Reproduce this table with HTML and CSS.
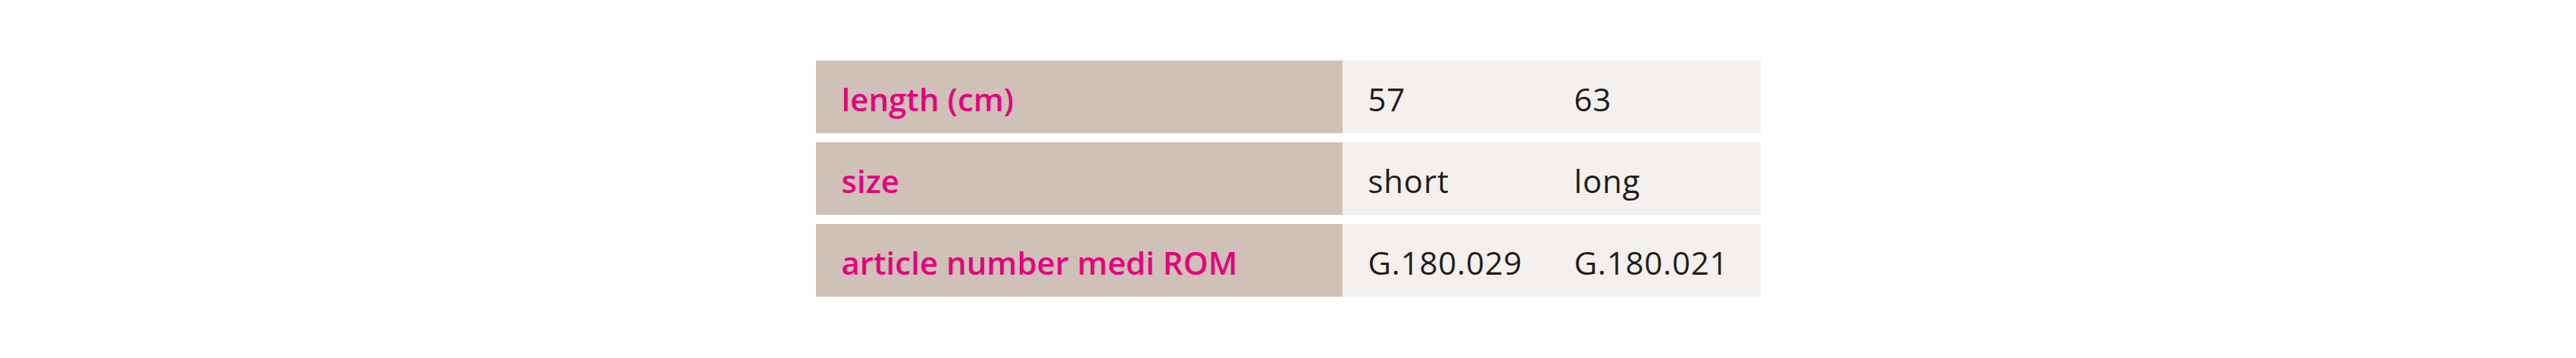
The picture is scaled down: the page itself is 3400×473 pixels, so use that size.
FILE: index.html
```html
<!DOCTYPE html>
<html lang="en">
<head>
<meta charset="utf-8">
<title>Product table</title>
<link rel="stylesheet" href="styles.css">
</head>
<body>
<div class="spec-table">
  <div class="spec-row">
    <div class="spec-label">length (cm)</div>
    <div class="spec-value">57</div>
    <div class="spec-value">63</div>
  </div>
  <div class="spec-row">
    <div class="spec-label">size</div>
    <div class="spec-value">short</div>
    <div class="spec-value">long</div>
  </div>
  <div class="spec-row">
    <div class="spec-label">article number medi ROM</div>
    <div class="spec-value">G.180.029</div>
    <div class="spec-value">G.180.021</div>
  </div>
</div>
</body>
</html>
```
FILE: styles.css
```css
html, body {
  margin: 0;
  padding: 0;
  background: #ffffff;
}
body {
  padding-top: 80px;
  font-family: "Open Sans", "Noto Sans", sans-serif;
  font-size: 42px;
  line-height: 57px;
}
.spec-table {
  width: 1247px;
  margin: 0 auto;
  display: flex;
  flex-direction: column;
  gap: 12px;
}
.spec-row {
  display: grid;
  grid-template-columns: 695px 272px 280px;
  height: 96px;
}
.spec-label,
.spec-value {
  padding: 22px 34px 17px;
  white-space: nowrap;
}
.spec-label {
  background: #cfc1b8;
  color: #e5007e;
  font-weight: 600;
}
.spec-value {
  background: #f4f0ed;
  color: #1d1d1b;
  font-weight: 400;
  letter-spacing: 0.8px;
}
```
